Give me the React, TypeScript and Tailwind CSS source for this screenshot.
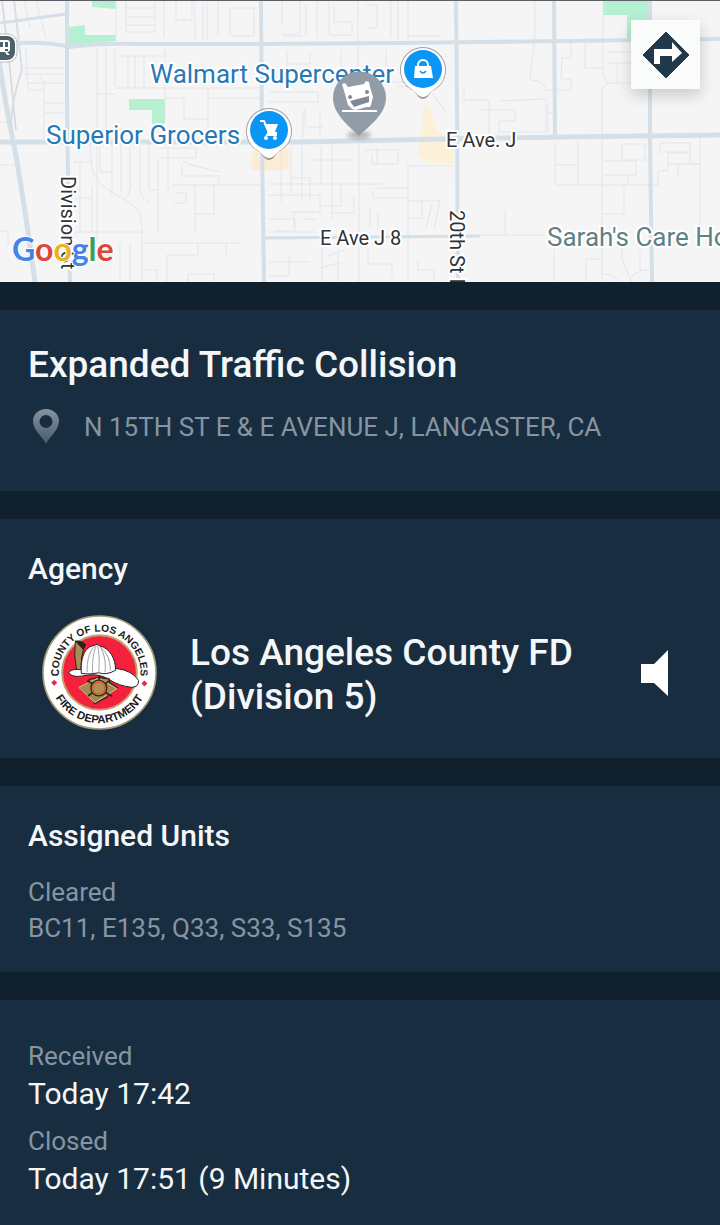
import type { ReactNode } from 'react';

const minorStreets = [
  // west side
  'M24 0 L30 28 M36 0 L46 38 M26 48 L28 90 H44 M24 68 H66 M24 74 H66 M27 83 H66 M40 75 L44 83 V140 M45 103 H66 M45 113 H66 M0 122 H10 M0 165 H16 M0 231 H8 V246',
  // between Division and 10th
  'M116 0 V42 M126 0 V32 H155 V0 M126 8 H155 M126 17 H155 M126 25 H155 M164 0 V38 M176 0 V20 H192 V0 M195 0 V40 M203 0 V40 M207 0 V40 M218 0 V36 M230 8 H254 V36 H230 Z',
  'M97 48 V240 M106 48 V138 M115 48 V86 M118 56 H165 M128 56 V88 M135 56 V88 M144 56 V88 M115 88 H260 M97 94 H116 M165 46 V120 M208 88 V142 M165 98 H184 V119 H208 M208 98 H262',
  'M90 144 L91 160 C92 176 100 184 110 191 L130 203 C139 210 142 216 142 230 V282 M74 162 H92 M74 198 H92 M80 162 V232 M92 186 V232 M74 232 H142 M100 144 V172 H112 M112 144 V196 M121 144 V192 M130 144 V180 Q133 190 124 200 M140 144 V190 Q142 200 150 203 M149 144 V190 H158 M158 158 V232 M168 144 V190',
  'M160 148 H196 V158 H160 M182 164 V176 H219 V184 M182 160 Q190 166 204 168 L219 172 M172 185 H262 M195 185 V232 M214 185 V214 H195 M175 193 H186 V203 H174 M142 243 H240 M198 243 V255 H167 V282 M120 243 V282 M130 243 V282 M226 255 V243 M188 282 V274 H214 V282 M143 270 H157 V282',
  // centre
  'M282 0 V24 M282 34 H300 V0 M306 5 V36 H282 M317 0 V38 M329 0 V35 H352 V22 H334 V5 M358 0 V140 M366 5 H377 V28 H367 M391 0 V38 M398 0 V40 M408 0 V42 M408 36 H440',
  'M270 92 H318 V102 H268 M287 50 V88 M310 52 V64 H287 M305 108 V127 H323 M303 111 V138 M320 112 V136 M341 50 V70 M386 50 V75 M398 86 L428 88 L446 112 M464 86 V100 H480 M376 82 H410',
  'M281 142 V202 M291 148 V192 M302 142 V200 M310 160 H352 M321 146 V184 M332 142 V220 M291 178 H310 V202 M268 184 H360 M268 195 H320 V212 H290 M341 184 V206 H320 M354 195 V213 H330 M359 142 V282 M269 219 H295 V231 H275 M294 211 V228 M304 219 H317 M365 150 H398 V164 H372 V154 M377 148 V164 M360 184 H382 M375 188 H408 M373 190 V198 H408 M408 164 V282 M268 232 H316',
  'M408 166 H452 M408 201 H440 L434 229 M422 201 V218 H410 M432 204 L426 228 M370 208 V228 M378 212 V230 M269 262 H310 M322 248 V282 M338 250 V282 M289 256 V276 H268 M368 248 V264 H392 V276 M418 260 V270 H434 V282 M328 256 L344 250 M320 268 L342 262',
  // east side
  'M535 0 V36 L530 80 L541 82 L547 90 H571 V79 H561 L562 58 H571 V42 M603 0 V72 L607 84 L602 88 V282 M585 42 V68 H603 M607 52 H632 M607 63 H632 M617 63 V83 M607 83 H632',
  'M480 100 H489 V134 M500 101 L546 99 V132 H499 V121 H515 V110 H480 M548 105 V132 M548 113 H555 M555 142 V185 H658 V171 L668 170 V153 H690 V164 H700 M578 140 V185 M555 165 H578 M622 144 H645 V160 H622 Z M603 161 H636 V175 H603 M628 175 V185 M660 143 H690 V152 H660 Z M668 164 H700 M678 164 V176 M700 136 V228 M624 186 V214 H603 M480 235 H545 M505 210 V234 M554 250 V282 M586 282 V259 H603 M622 245 V260 L632 282 M640 250 V272 M630 278 Q640 269 648 270 M603 274 Q612 274 620 282',
];

const majorRoads = [
  { d: 'M0 23 L66 14', w: 3 },
  { d: 'M20 43 Q50 42 70 47 Q100 43 140 44 H240 L400 43 L480 42 L720 39', w: 4 },
  { d: 'M0 142 H300 L445 139 L560 137 L720 135', w: 5 },
  { d: 'M67 0 V100 L68 180 L70 282', w: 4 },
  { d: 'M-4 40 Q6 110 14 145 Q24 200 35 282', w: 5 },
  { d: 'M14 0 L22 70 Q8 110 12 140', w: 2 },
  { d: 'M261 0 L262 140 L264 282', w: 4 },
  { d: 'M456 0 L457 110 L458 282', w: 4 },
  { d: 'M554 0 L555 137', w: 4 },
  { d: 'M650 0 V140 L652 282', w: 4 },
  { d: 'M264 238 L480 236', w: 3 },
];

function PlacePin({ x, y, children }: { x: number; y: number; children: ReactNode }) {
  return (
    <g transform={`translate(${x} ${y})`}>
      <path
        d="M0 29 C-4 29 -6 25 -9 21 C-16 18 -23 11 -23 0 A23 23 0 0 1 23 0 C23 11 16 18 9 21 C6 25 4 29 0 29Z"
        fill="#6b6468"
        opacity="0.6"
      />
      <path
        d="M0 27 C-4 27 -7 23 -10 20 C-17 16 -22 10 -22 0 A22 22 0 0 1 22 0 C22 10 17 16 10 20 C7 23 4 27 0 27Z"
        fill="#fff"
      />
      <circle cy="-1" r="19" fill="#0b96f5" />
      {children}
    </g>
  );
}

function StreetMap() {
  return (
    <svg
      viewBox="0 0 720 282"
      preserveAspectRatio="xMidYMid slice"
      className="block h-[282px] w-full font-['Roboto',sans-serif]"
      role="img"
      aria-label="Map"
    >
      <defs>
        <filter id="soft" x="-50%" y="-50%" width="200%" height="200%">
          <feGaussianBlur stdDeviation="2" />
        </filter>
      </defs>
      <rect width="720" height="282" fill="#f5f5f6" />
      <g fill="#b5f1d0">
        <path d="M92 0 H116 V9 L92 7Z" />
        <path d="M69 27 L85 25 V35 H116 V41 L69 45Z" />
        <path d="M129 99 H165 V124 H152 V110 H129Z" />
        <path d="M603 0 H648 V38 H627 V15 H603Z" />
      </g>
      <path d="M424 106 Q431 106 433 118 L438 132 L454 138 V163 H428 L418 154 L421 130Z" fill="#fcf1d8" />
      <path d="M253 150 H289 V170 H251Z" fill="#fcecd3" />
      <g fill="none" stroke="#e3e5ea" strokeWidth="1">
        {minorStreets.map((d) => (
          <path key={d} d={d} />
        ))}
      </g>
      <path d="M2 0 L10 70 L16 130" fill="none" stroke="#d3d6db" strokeWidth="1.5" />
      <g fill="none" stroke="#d5dfe7">
        {majorRoads.map((r) => (
          <path key={r.d} d={r.d} strokeWidth={r.w} />
        ))}
      </g>
      <rect width="720" height="1" fill="#5d5e66" />

      <rect x="-20" y="34" width="37" height="28" rx="9" fill="#fff" stroke="#b9bec3" />
      <rect x="-20" y="36" width="35" height="24" rx="8" fill="#4a6268" />
      <path d="M-3 40 H7 Q10 40 10 43 V49 Q10 52 7 52 L10 55 H7 L5 52 H-1 L-3 55Z" fill="#fff" />
      <path d="M-2 42 H3 V47 H-2Z M5 42 H8 V47 H5Z M5 49 H8 V51 H5Z" fill="#4a6268" />

      <g stroke="#fff" strokeWidth="4" strokeLinejoin="round" paintOrder="stroke">
        <g fill="#2878b5" fontSize="26">
          <text x="150" y="83">Walmart Supercenter</text>
          <text x="46" y="144">Superior Grocers</text>
        </g>
        <text x="547" y="246" fill="#5f8084" fontSize="26">Sarah's Care Home</text>
        <g fill="#303236" fontSize="20">
          <text x="446" y="147">E Ave. J</text>
          <text x="320" y="245">E Ave J 8</text>
          <text transform="translate(61 176) rotate(90)">Division St</text>
          <text transform="translate(450 210) rotate(90)">20th St E</text>
        </g>
      </g>

      <PlacePin x={269} y={131}>
        <path d="M-9 -10 H-5 L0 2 H8" fill="none" stroke="#fff" strokeWidth="2" />
        <path d="M-5 -7 H9 L6 1 H-1Z" fill="#fff" />
        <path d="M0 1 L-2 4 H8" fill="none" stroke="#fff" strokeWidth="2" />
        <circle cx="-3" cy="7" r="2" fill="#fff" />
        <circle cx="6" cy="7" r="2" fill="#fff" />
      </PlacePin>
      <PlacePin x={423} y={70}>
        <path d="M-8 -4 H8 L10 8 H-9Z" fill="#fff" />
        <path d="M-5 -3 V-5 A5 5 0 0 1 5 -5 V-3" fill="none" stroke="#fff" strokeWidth="2" />
        <path d="M-3 1 Q0 5 3 1" fill="none" stroke="#0b96f5" strokeWidth="1.5" />
      </PlacePin>

      <ellipse cx="359" cy="135" rx="12" ry="4" fill="#4b545c" opacity="0.4" filter="url(#soft)" />
      <path
        d="M359 136 C354 130 333 116 333 98 A26.5 26.5 0 0 1 386 98 C386 116 364 130 359 136Z"
        fill="#929ca6"
      />
      <path
        d="M342 84 L345 83 L348 87 L364 84 L366 81 L369 82 L370 87 L373 97 L371 105 L370 107 L366 107 L356 110 L352 109 L348 105 L345 94Z"
        fill="#fff"
      />
      <circle cx="350" cy="97" r="2" fill="#7f8a94" />
      <circle cx="367" cy="92" r="2" fill="#7f8a94" />
      <path d="M350 101 L369 96 L369 102 L354 107Z" fill="#7f8a94" />
      <path d="M342 111 H377" stroke="#fff" strokeWidth="2" />

      <text x="12" y="261" className="font-['Lato',sans-serif]" fontSize="32" fontWeight="700" stroke="#fff" strokeWidth="2" paintOrder="stroke">
        <tspan fill="#4484e8">G</tspan>
        <tspan fill="#d9483b">o</tspan>
        <tspan fill="#eab21c">o</tspan>
        <tspan fill="#4484e8">g</tspan>
        <tspan fill="#33a353">l</tspan>
        <tspan fill="#d9483b">e</tspan>
      </text>
    </svg>
  );
}

function AgencySeal() {
  return (
    <svg viewBox="35 43 348 348" className="size-[115px] shrink-0" role="img" aria-label="County of Los Angeles Fire Department">
      <defs>
        <path id="seal-top" d="M209 341 A124 124 0 0 1 209 93 A124 124 0 0 1 209 341" />
        <path id="seal-bottom" d="M209 64 A153 153 0 0 0 209 370 A153 153 0 0 0 209 64" />
      </defs>
      <circle cx="209" cy="217" r="171" fill="#fff" stroke="#a59c78" strokeWidth="5" />
      <circle cx="209" cy="217" r="113" fill="#f4203c" stroke="#c2a272" strokeWidth="6" />
      <g fill="#1b1b20" fontWeight="700" className="font-['Liberation_Sans',sans-serif]" textAnchor="middle">
        <text fontSize="31"><textPath href="#seal-top" startOffset="50%">COUNTY OF LOS ANGELES</textPath></text>
        <text fontSize="34"><textPath href="#seal-bottom" startOffset="50%">FIRE DEPARTMENT</textPath></text>
      </g>
      <path d="M72 239 L81 248 L72 257 L63 248Z M345 241 L354 250 L345 259 L336 250Z" fill="#dc2f4a" />
      <path d="M136 122 L166 134 Q158 150 155 172 L152 222 L141 220 L134 165Z" fill="#a98d55" stroke="#2a2019" strokeWidth="3" />
      <path d="M134 121 Q154 118 168 132 L160 149Z" fill="#2c211c" />
      <path
        d="M116 218 Q122 207 141 208 L256 204 Q310 211 327 241 Q329 260 307 262 Q268 258 238 238 Q204 216 154 228 Q126 232 116 218Z"
        fill="#fff"
        stroke="#2a2024"
        strokeWidth="3"
      />
      <path
        d="M154 220 C151 176 163 138 194 135 Q201 128 209 136 C241 144 257 174 258 210 Q230 226 207 218 Q180 224 154 220Z"
        fill="#fff"
        stroke="#2a2024"
        strokeWidth="3"
      />
      <path d="M172 216 C170 184 178 154 194 137 M188 218 C187 184 190 156 199 137 M207 217 C209 184 208 156 204 137 M226 216 C229 184 222 154 209 137 M242 211 C242 180 232 156 212 140" fill="none" stroke="#77777a" strokeWidth="2" />
      <path d="M207 232 L238 236 L240 248 L262 262 L236 276 L234 290 L195 311 L180 286 L148 262 L176 252 L178 238Z" fill="#a58751" stroke="#302317" strokeWidth="4" />
      <path d="M146 262 L206 234 L262 266 L195 308Z" fill="#a58751" stroke="#d8bd84" strokeWidth="3" />
      <path d="M172 242 L190 252 M241 241 L223 253 M174 288 L191 276 M247 289 L223 275" stroke="#302317" strokeWidth="5" />
      <circle cx="207" cy="264" r="24" fill="#b58d52" stroke="#302317" strokeWidth="4" />
      <circle cx="207" cy="264" r="18" fill="none" stroke="#dd4937" strokeWidth="3" />
      <path d="M208 225 V240" stroke="#302317" strokeWidth="5" />
    </svg>
  );
}

export default function App() {
  return (
    <main className="flex min-h-screen flex-col gap-7 bg-[#11202d] font-['Roboto',sans-serif] text-[#f4f7f9]">
      <div className="relative">
        <StreetMap />
        <button
          type="button"
          aria-label="Directions"
          className="absolute top-5 right-5 flex size-[69px] items-center justify-center bg-[#fafbfb] shadow-[0_6px_14px_rgba(0,0,0,0.18)]"
        >
          <svg viewBox="0 0 48 48" className="size-12">
            <path d="M24 1 L47 24 L24 47 L1 24Z" fill="#22384b" stroke="#22384b" strokeWidth="1" strokeLinejoin="round" />
            <path d="M12 33 V18 H30 V11 L40 22 L30 31 V25 H18 V33Z" fill="#fff" />
          </svg>
        </button>
      </div>

      <section className="bg-[#182e40] px-7 pt-[33px] pb-[46px]">
        <h1 className="text-[37px] leading-[44px] font-medium">Expanded Traffic Collision</h1>
        <div className="mt-[22px] flex items-center gap-6 pl-1">
          <svg viewBox="0 0 28 36" className="h-9 w-7 shrink-0" aria-hidden="true">
            <defs>
              <linearGradient id="pin-shade" x1="0" y1="0" x2="0" y2="1">
                <stop offset="0" stopColor="#8794a1" />
                <stop offset="1" stopColor="#48596a" />
              </linearGradient>
            </defs>
            <path
              fillRule="evenodd"
              d="M14 35 C12 29 1 22 1 12 A13 12 0 0 1 27 12 C27 22 16 29 14 35Z M14 6 A6.5 6.5 0 1 0 14 19 A6.5 6.5 0 1 0 14 6Z"
              fill="url(#pin-shade)"
            />
          </svg>
          <p className="text-[26px] leading-9 text-[#8695a3]">N 15TH ST E &amp; E AVENUE J, LANCASTER, CA</p>
        </div>
      </section>

      <section className="bg-[#182e40] px-7 pt-8 pb-7">
        <h2 className="text-[30px] leading-9 font-medium">Agency</h2>
        <div className="mt-7 flex items-center pl-[14px]">
          <AgencySeal />
          <p className="ml-[33px] flex-1 pt-1 text-[37px] leading-[44px] font-medium">
            Los Angeles County FD
            <br />
            (Division 5)
          </p>
          <button type="button" aria-label="Play audio" className="mr-[22px] shrink-0">
            <svg viewBox="0 0 30 48" className="h-12 w-[30px]">
              <path d="M1 15 H14 L28 1 V47 L14 34 H1Z" fill="#fff" />
            </svg>
          </button>
        </div>
      </section>

      <section className="bg-[#182e40] px-7 pt-8 pb-[26px]">
        <h2 className="text-[30px] leading-9 font-medium">Assigned Units</h2>
        <dl className="mt-5 text-[26px] leading-9 text-[#8695a3]">
          <dt>Cleared</dt>
          <dd>BC11, E135, Q33, S33, S135</dd>
        </dl>
      </section>

      <section className="flex-1 bg-[#182e40] px-7 pt-[38px] pb-6">
        <dl>
          <dt className="text-[26px] leading-9 text-[#8695a3]">Received</dt>
          <dd className="text-[30px] leading-10">Today 17:42</dd>
          <dt className="mt-[9px] text-[26px] leading-9 text-[#8695a3]">Closed</dt>
          <dd className="text-[30px] leading-10">Today 17:51 (9 Minutes)</dd>
        </dl>
      </section>
    </main>
  );
}
